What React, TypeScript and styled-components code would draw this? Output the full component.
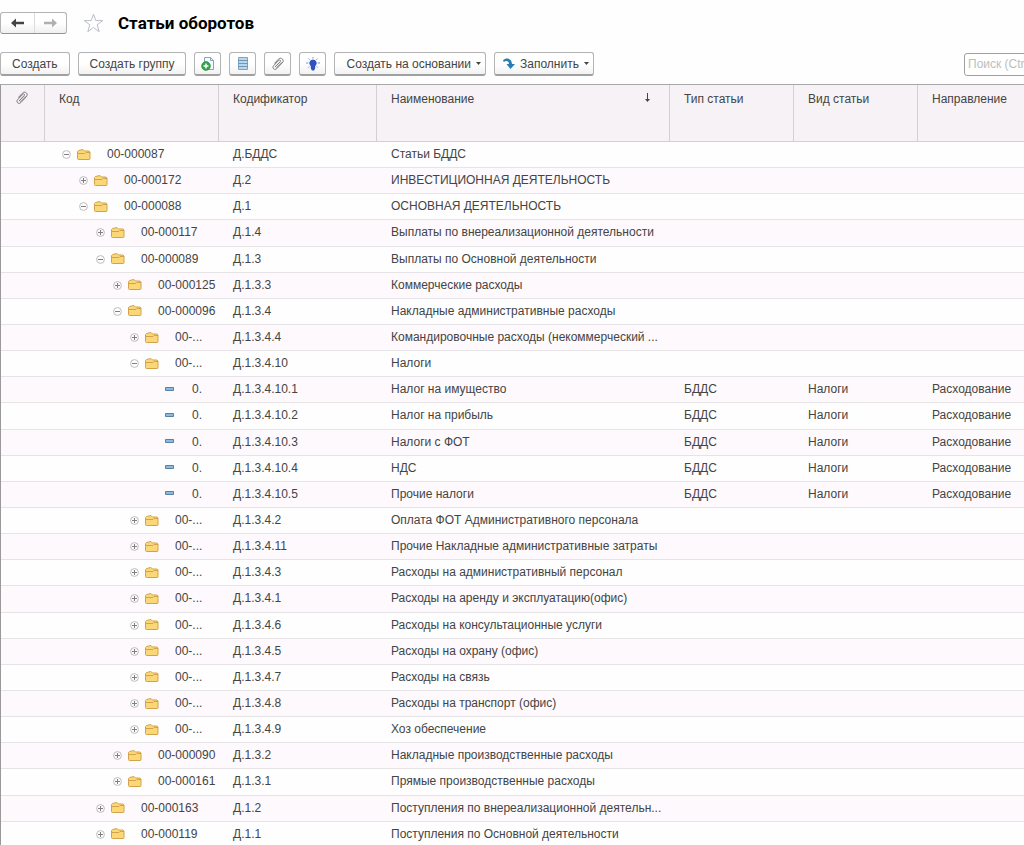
import React from "react";
import styled, { createGlobalStyle } from "styled-components";

const GlobalStyle = createGlobalStyle`
  *, *::before, *::after { box-sizing: border-box; }
  html, body { margin: 0; background: #fefefe; }
  body, button, input { font-family: "Liberation Sans", Arial, sans-serif; font-size: 12px; color: #444; }
`;

const Viewport = styled.div`
  height: 100vh;
  overflow: hidden;
`;

const Screen = styled.main`
  display: flex;
  flex-direction: column;
  min-width: 1140px;
`;

const TitleBar = styled.header`
  display: flex;
  align-items: center;
  flex: none;
  height: 46px;
`;

const History = styled.nav`
  display: flex;
  height: 22px;
  border: 1px solid #b4b4b4;
  border-bottom-color: #949494;
  border-radius: 3px;
  background: linear-gradient(#fff 50%, #f0f0f0);
`;

const HistoryButton = styled.button`
  display: flex;
  align-items: center;
  justify-content: center;
  width: 33px;
  padding: 0;
  border: 0;
  background: none;
  color: #444;

  & + & {
    width: 32px;
    border-left: 1px solid #dcdcdc;
    color: #b0b0b0;
  }
`;

const StarButton = styled.button`
  display: flex;
  margin: 0 14px 0 16px;
  padding: 0;
  border: 0;
  background: none;
`;

const Title = styled.h1`
  margin: 0;
  font-family: Roboto, "Liberation Sans", sans-serif;
  font-size: 17px;
  line-height: 22px;
  font-weight: 700;
  color: #000;
`;

const Toolbar = styled.div`
  display: flex;
  align-items: center;
  flex: none;
  gap: 8px;
  height: 38px;
  padding-bottom: 2px;
`;

const ToolButton = styled.button<{ $icon?: boolean }>`
  display: flex;
  align-items: center;
  justify-content: center;
  gap: 5px;
  height: 24px;
  width: ${(p) => (p.$icon ? "27px" : "auto")};
  padding: ${(p) => (p.$icon ? "0" : "0 11px")};
  border: 1px solid #b4b4b4;
  border-bottom: 2px solid #a0a0a0;
  border-radius: 3px;
  background: linear-gradient(#fff 50%, #f2f2f2);
  white-space: nowrap;
`;

const MenuButton = styled(ToolButton)`
  padding: 0 4px 0 11px;
`;

const FillButton = styled(ToolButton)`
  padding: 0 4px 0 8px;
`;

const Search = styled.input`
  width: 176px;
  height: 23px;
  margin-left: auto;
  padding: 0 3px;
  border: 1px solid #a0a0a0;
  border-radius: 3px;
  background: #fff;

  &::placeholder { color: #bdbdbd; opacity: 1; }
`;

const Grid = styled.table`
  width: 100%;
  height: calc(100vh - 81px);
  table-layout: fixed;
  border-collapse: separate;
  border-spacing: 0;
  border-top: 1px solid #a8a8a8;
  border-left: 1px solid #999;
`;

const Column = styled.col<{ $width?: number }>`
  width: ${(p) => (p.$width ? `${p.$width}px` : "auto")};
`;

const HeadCell = styled.th`
  height: 57px;
  padding: 6px 15px 0 14px;
  border-right: 1px solid #d2d0d2;
  border-bottom: 1px solid #d2d0d2;
  background: #f6f2f6;
  font-weight: 400;
  line-height: 16px;
  text-align: left;
  vertical-align: top;
`;

const SortLabel = styled.span`
  display: flex;
  justify-content: space-between;
`;

const BodyRow = styled.tr`
  &:nth-child(even) { background: #fdf9fd; }
`;

const Cell = styled.td`
  padding: 0 14px;
  border-bottom: 1px solid #e6e4e6;
  line-height: 25px;
  white-space: nowrap;
`;

const Node = styled.span<{ $level: number }>`
  display: flex;
  align-items: center;
  padding-left: ${(p) => 3 + p.$level * 17}px;
`;

const Toggle = styled.button`
  display: flex;
  width: 9px;
  margin-right: 6px;
  padding: 0;
  border: 0;
  background: none;
`;

const ToggleSpace = styled.span`
  width: 18px;
`;

const NodeIcon = styled.span<{ $leaf: boolean }>`
  display: flex;
  width: ${(p) => (p.$leaf ? "11px" : "14px")};
  margin-right: 16px;
`;

const ClipIcon = () => (
  <svg width="14" height="14" viewBox="0 0 14 14" fill="none" stroke="#777" strokeLinecap="round" aria-hidden="true">
    <path d="M4.200 9.800 9.200 4.600c1-1-.4-2.300-1.400-1.300L2.600 8.700c-2 2.200 1 5 3.100 3l5.600-5.900c2.600-2.800-1.200-6.400-3.900-3.600L3.600 6.200" />
    <path d="M5.400 10.600l4.900-5.200" stroke="#999" />
  </svg>
);

const Arrow = ({ flip }: { flip?: boolean }) => (
  <svg width="13" height="10" viewBox="0 0 13 10" aria-hidden="true">
    <path
      d={flip ? "M13 5 8 .5v3.300H0v2.400h8v3.300z" : "M0 5 5 .5v3.300h8v2.400H5v3.300z"}
      fill="currentColor"
    />
  </svg>
);

const Caret = () => (
  <svg width="5" height="3" viewBox="0 0 5 3" aria-hidden="true">
    <path d="M0 0h5L2.500 3z" fill="#444" />
  </svg>
);

const Folder = () => (
  <svg width="14" height="12" viewBox="0 0 14 12" aria-hidden="true">
    <path d="M.5 9.500V2.500l1-1L6 .5 7.500 2h4.500l1 1v6.500q0 1-1 1H1.500q-1 0-1-1z" fill="#fad877" stroke="#d3a24a" />
    <path d="M1 4.500h7l1-1h4" fill="none" stroke="#d3a24a" />
  </svg>
);

const Leaf = () => (
  <svg width="9" height="6" viewBox="0 0 9 6" aria-hidden="true">
    <path d="M.5.500h8v3h-8z" fill="#8bbbe0" stroke="#5780a2" />
  </svg>
);

const ToggleIcon = ({ open }: { open: boolean }) => (
  <svg width="9" height="9" viewBox="0 0 9 9" fill="none" aria-hidden="true">
    <circle cx="4.500" cy="4.500" r="3.900" stroke="#b5b5b5" strokeWidth=".9" />
    <path d={open ? "M2 4.500h5" : "M2 4.500h5M4.500 2v5"} stroke="#808080" />
  </svg>
);

const columns = [
  { title: "Код", width: 174 },
  { title: "Кодификатор", width: 158 },
  { title: "Наименование", width: 293, sorted: true },
  { title: "Тип статьи", width: 124 },
  { title: "Вид статьи", width: 124 },
  { title: "Направление" },
];

type Kind = "open" | "closed" | "leaf";
type Item = [number, Kind, string, string, string];

const items: Item[] = [
  [0, "open", "00-000087", "Д.БДДС", "Статьи БДДС"],
  [1, "closed", "00-000172", "Д.2", "ИНВЕСТИЦИОННАЯ ДЕЯТЕЛЬНОСТЬ"],
  [1, "open", "00-000088", "Д.1", "ОСНОВНАЯ ДЕЯТЕЛЬНОСТЬ"],
  [2, "closed", "00-000117", "Д.1.4", "Выплаты по внереализационной деятельности"],
  [2, "open", "00-000089", "Д.1.3", "Выплаты по Основной деятельности"],
  [3, "closed", "00-000125", "Д.1.3.3", "Коммерческие расходы"],
  [3, "open", "00-000096", "Д.1.3.4", "Накладные административные расходы"],
  [4, "closed", "00-...", "Д.1.3.4.4", "Командировочные расходы (некоммерческий ..."],
  [4, "open", "00-...", "Д.1.3.4.10", "Налоги"],
  [5, "leaf", "0.", "Д.1.3.4.10.1", "Налог на имущество"],
  [5, "leaf", "0.", "Д.1.3.4.10.2", "Налог на прибыль"],
  [5, "leaf", "0.", "Д.1.3.4.10.3", "Налоги с ФОТ"],
  [5, "leaf", "0.", "Д.1.3.4.10.4", "НДС"],
  [5, "leaf", "0.", "Д.1.3.4.10.5", "Прочие налоги"],
  [4, "closed", "00-...", "Д.1.3.4.2", "Оплата ФОТ Административного персонала"],
  [4, "closed", "00-...", "Д.1.3.4.11", "Прочие Накладные административные затраты"],
  [4, "closed", "00-...", "Д.1.3.4.3", "Расходы на административный персонал"],
  [4, "closed", "00-...", "Д.1.3.4.1", "Расходы на аренду и эксплуатацию(офис)"],
  [4, "closed", "00-...", "Д.1.3.4.6", "Расходы на консультационные услуги"],
  [4, "closed", "00-...", "Д.1.3.4.5", "Расходы на охрану (офис)"],
  [4, "closed", "00-...", "Д.1.3.4.7", "Расходы на связь"],
  [4, "closed", "00-...", "Д.1.3.4.8", "Расходы на транспорт (офис)"],
  [4, "closed", "00-...", "Д.1.3.4.9", "Хоз обеспечение"],
  [3, "closed", "00-000090", "Д.1.3.2", "Накладные производственные расходы"],
  [3, "closed", "00-000161", "Д.1.3.1", "Прямые производственные расходы"],
  [2, "closed", "00-000163", "Д.1.2", "Поступления по внереализационной деятельн..."],
  [2, "closed", "00-000119", "Д.1.1", "Поступления по Основной деятельности"],
];

export default function App() {
  return (
    <Viewport>
      <GlobalStyle />
      <Screen>
        <TitleBar>
          <History aria-label="История">
            <HistoryButton aria-label="Назад"><Arrow /></HistoryButton>
            <HistoryButton aria-label="Вперед"><Arrow flip /></HistoryButton>
          </History>
          <StarButton aria-label="В избранное">
            <svg width="21" height="20" viewBox="0 0 21 20" aria-hidden="true">
              <path d="M10.500 1.200 12.800 7.600h6.900l-5.500 4.200 2 6.900-5.700-4.200-5.700 4.200 2-6.900L1.300 7.600h6.900z" fill="#fff" stroke="#b9bdc4" />
            </svg>
          </StarButton>
          <Title>Статьи оборотов</Title>
        </TitleBar>
        <Toolbar>
          <ToolButton>Создать</ToolButton>
          <ToolButton>Создать группу</ToolButton>
          <ToolButton $icon aria-label="Создать копированием">
            <svg width="14" height="14" viewBox="0 0 14 14" aria-hidden="true">
              <path d="M3.500.500h6l3 3v9h-9z" fill="#f7fbff" stroke="#8ba4bd" />
              <path d="M9.500.500v3h3" fill="none" stroke="#8ba4bd" />
              <circle cx="5" cy="9" r="4.400" fill="#2fa544" stroke="#218536" strokeWidth=".6" />
              <path d="M5 6.500v5M2.500 9h5" stroke="#fff" strokeWidth="1.500" />
            </svg>
          </ToolButton>
          <ToolButton $icon aria-label="Режим просмотра">
            <svg width="10" height="13" viewBox="0 0 10 13" aria-hidden="true">
              <path d="M.5.500h9v12h-9z" fill="#b9d8f0" stroke="#7ca3c2" />
              <path d="M0 3.500h10M0 6.500h10M0 9.500h10" stroke="#6d98ba" />
            </svg>
          </ToolButton>
          <ToolButton $icon aria-label="Присоединенные файлы"><ClipIcon /></ToolButton>
          <ToolButton $icon aria-label="Подсказка">
            <svg width="14" height="14" viewBox="0 0 14 14" aria-hidden="true">
              <path d="M7 2.500a3.700 3.700 0 0 1 2.200 6.700V11.500L8 13.500H6l-1.200-2V9.200A3.700 3.700 0 0 1 7 2.500z" fill="#3350c0" />
              <path d="M7 0v1.500M2.400 1.600l1.200 1.200M11.600 1.600l-1.200 1.200M0 6h2.300M11.700 6H14M2.200 10.600l1.200-1.200M11.800 10.600l-1.200-1.200" stroke="#6f93dc" />
            </svg>
          </ToolButton>
          <MenuButton>Создать на основании <Caret /></MenuButton>
          <FillButton>
            <svg width="12" height="12" viewBox="0 0 12 12" aria-hidden="true">
              <path d="M0 2.500C3-.8 8.800 0 9 6h3l-4.500 5L3.500 6H6C6 3.300 3.500 2.200.800 4z" fill="#2a7cb4" />
            </svg>
            Заполнить <Caret />
          </FillButton>
          <Search type="search" placeholder="Поиск (Ctrl+F)" aria-label="Поиск" />
        </Toolbar>
        <Grid>
          <colgroup>
            <Column $width={44} />
            {columns.map((c) => <Column key={c.title} $width={c.width} />)}
          </colgroup>
          <thead>
            <tr>
              <HeadCell aria-label="Файлы"><ClipIcon /></HeadCell>
              {columns.map((c) => (
                <HeadCell key={c.title}>
                  {c.sorted ? (
                    <SortLabel>
                      {c.title}
                      <svg width="13" height="12" viewBox="0 0 13 12" aria-hidden="true">
                        <path d="M6.500 2v7" stroke="#444" />
                        <path d="M4 8h5L6.500 11z" fill="#444" />
                      </svg>
                    </SortLabel>
                  ) : c.title}
                </HeadCell>
              ))}
            </tr>
          </thead>
          <tbody>
            {items.map(([level, kind, code, codifier, name]) => (
              <BodyRow key={codifier}>
                <Cell />
                <Cell>
                  <Node $level={level}>
                    {kind === "leaf" ? <ToggleSpace /> : (
                      <Toggle aria-label={kind === "open" ? "Свернуть" : "Развернуть"}>
                        <ToggleIcon open={kind === "open"} />
                      </Toggle>
                    )}
                    <NodeIcon $leaf={kind === "leaf"}>{kind === "leaf" ? <Leaf /> : <Folder />}</NodeIcon>
                    {code}
                  </Node>
                </Cell>
                <Cell>{codifier}</Cell>
                <Cell>{name}</Cell>
                <Cell>{kind === "leaf" && "БДДС"}</Cell>
                <Cell>{kind === "leaf" && "Налоги"}</Cell>
                <Cell>{kind === "leaf" && "Расходование"}</Cell>
              </BodyRow>
            ))}
          </tbody>
        </Grid>
      </Screen>
    </Viewport>
  );
}
